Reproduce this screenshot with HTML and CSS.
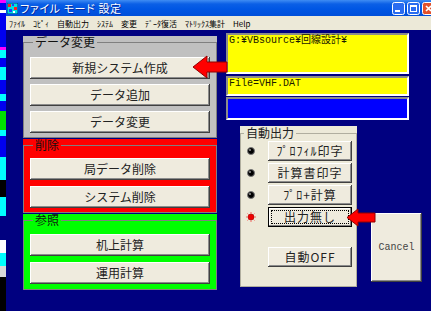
FILE: index.html
```html
<!DOCTYPE html>
<html lang="ja">
<head>
  <meta charset="UTF-8" />
  <title>ファイル モード 設定</title>
  <link rel="stylesheet" href="styles.css">
</head>
<body>
  <div class="strip"></div>

  <div class="window">
    <div class="titlebar">
      <svg class="app-icon" width="11" height="11" viewBox="0 0 11 11">
        <rect width="11" height="11" fill="#00e0e0"/>
        <rect x="1" y="1" width="3" height="3" fill="#ff2020"/>
        <rect x="5" y="1" width="2" height="2" fill="#2040ff"/>
        <rect x="7" y="4" width="3" height="3" fill="#ff2020"/>
        <rect x="2" y="6" width="3" height="3" fill="#2040ff"/>
        <rect x="6" y="8" width="2" height="2" fill="#ffffff"/>
        <rect x="0" y="0" width="11" height="11" fill="none" stroke="#003080" stroke-width="1"/>
      </svg>
      <span class="title">ファイル モード 設定</span>
      <div class="caption">
        <svg class="cap" width="13" height="13" viewBox="0 0 13 13">
          <rect x="0.5" y="0.5" width="12" height="12" rx="2" fill="#2a6cf0" stroke="#fff"/>
          <rect x="3" y="8" width="5" height="2" fill="#fff"/>
        </svg>
        <svg class="cap" width="13" height="13" viewBox="0 0 13 13">
          <rect x="0.5" y="0.5" width="12" height="12" rx="2" fill="#2a6cf0" stroke="#fff"/>
          <rect x="3.5" y="3.5" width="6" height="6" fill="none" stroke="#fff"/>
          <rect x="3" y="3" width="7" height="2" fill="#fff"/>
        </svg>
        <svg class="cap" width="13" height="13" viewBox="0 0 13 13">
          <rect x="0.5" y="0.5" width="12" height="12" rx="2" fill="#e2512c" stroke="#fff"/>
          <path d="M4 4 L9 9 M9 4 L4 9" stroke="#fff" stroke-width="1.6"/>
        </svg>
      </div>
    </div>

    <div class="menubar">
      <span>ﾌｧｲﾙ</span>
      <span>ｺﾋﾟｨ</span>
      <span>自動出力</span>
      <span>ｼｽﾃﾑ</span>
      <span>変更</span>
      <span>ﾃﾞｰﾀ復活</span>
      <span>ﾏﾄﾘｯｸｽ集計</span>
      <span>Help</span>
    </div>

    <div class="client">
      <div class="left">
        <div class="group group-gray">
          <fieldset>
            <legend>データ変更</legend>
            <button class="btn">新規システム作成</button>
            <button class="btn">データ追加</button>
            <button class="btn">データ変更</button>
          </fieldset>
        </div>
        <div class="group group-red">
          <fieldset>
            <legend>削除</legend>
            <button class="btn">局データ削除</button>
            <button class="btn">システム削除</button>
          </fieldset>
        </div>
        <div class="group group-green">
          <fieldset>
            <legend>参照</legend>
            <button class="btn">机上計算</button>
            <button class="btn">運用計算</button>
          </fieldset>
        </div>
      </div>

      <div class="right">
        <div class="box path-box">G:¥VBsource¥回線設計¥</div>
        <div class="box file-box">File=VHF.DAT</div>
        <div class="box blue-box"></div>

        <div class="lower">
          <div class="auto-panel">
            <fieldset>
              <legend>自動出力</legend>
              <div class="auto-row">
                <span class="led"><svg width="10" height="10" viewBox="0 0 10 10"><circle cx="5" cy="5" r="3.5" fill="#000" stroke="#777"/><circle cx="4" cy="4" r="1" fill="#999"/></svg></span>
                <button class="btn btn-small">ﾌﾟﾛﾌｨﾙ印字</button>
              </div>
              <div class="auto-row">
                <span class="led"><svg width="10" height="10" viewBox="0 0 10 10"><circle cx="5" cy="5" r="3.5" fill="#000" stroke="#777"/><circle cx="4" cy="4" r="1" fill="#999"/></svg></span>
                <button class="btn btn-small">計算書印字</button>
              </div>
              <div class="auto-row">
                <span class="led"><svg width="10" height="10" viewBox="0 0 10 10"><circle cx="5" cy="5" r="3.5" fill="#000" stroke="#777"/><circle cx="4" cy="4" r="1" fill="#999"/></svg></span>
                <button class="btn btn-small">ﾌﾟﾛ+計算</button>
              </div>
              <div class="auto-row">
                <span class="led"><svg width="10" height="10" viewBox="0 0 10 10"><path d="M5 0V1.5M5 8.5V10M0 5H1.5M8.5 5H10M1.5 1.5L2.5 2.5M7.5 7.5L8.5 8.5M8.5 1.5L7.5 2.5M2.5 7.5L1.5 8.5" stroke="#ff4040" stroke-width="0.8"/><circle cx="5" cy="5" r="3" fill="#f00000" stroke="#a00000" stroke-width="0.6"/></svg></span>
                <button class="btn btn-small btn-focus">出力無し</button>
              </div>
              <button class="btn btn-small btn-off">自動OFF</button>
            </fieldset>
          </div>
          <button class="btn btn-cancel">Cancel</button>
        </div>
      </div>

      <svg class="arrow arrow-new" width="36" height="24" viewBox="0 0 36 24">
        <polygon points="1,12 15,1 15,7 35,7 35,17 15,17 15,23" fill="#ff0000" stroke="#900000" stroke-width="1"/>
      </svg>
      <svg class="arrow arrow-none" width="30" height="19" viewBox="0 0 30 19">
        <polygon points="1,9.5 12,1 12,5 29,5 29,14 12,14 12,18" fill="#ff0000" stroke="#900000" stroke-width="1"/>
      </svg>
    </div>
  </div>
</body>
</html>
```

FILE: styles.css
```css
* {
  box-sizing: border-box;
}

body {
  margin: 0;
  width: 431px;
  height: 311px;
  overflow: hidden;
  display: flex;
  font-family: "Noto Sans CJK JP", sans-serif;
  background: #000080;
}

/* bits of another window behind this one */
.strip {
  flex: none;
  width: 6px;
  background: linear-gradient(to bottom,
    #ff00ff 0, #ff00ff 3px,
    #0000f0 3px, #0000f0 10px,
    #ffffff 10px, #ffffff 13px,
    #0000f0 13px, #0000f0 47px,
    #ff00ff 47px, #ff00ff 50px,
    #00ffff 50px, #00ffff 58px,
    #0000f0 58px, #0000f0 67px,
    #00ffff 67px, #00ffff 80px,
    #0000f0 80px, #0000f0 94px,
    #00ffff 94px, #00ffff 101px,
    #0000f0 101px, #0000f0 111px,
    #00e000 111px, #00e000 130px,
    #00ffff 130px, #00ffff 136px,
    #0000f0 136px, #0000f0 157px,
    #00ffff 157px, #00ffff 180px,
    #000000 180px, #000000 197px,
    #00ffff 197px, #00ffff 216px,
    #000080 216px, #000080 240px,
    #ffffff 240px, #ffffff 253px,
    #00ffff 253px, #00ffff 266px,
    #d8d8d8 266px, #d8d8d8 277px,
    #000000 277px);
}

.window {
  flex: none;
  width: 429px;
  display: flex;
  flex-direction: column;
}

.titlebar {
  height: 16px;
  display: flex;
  align-items: center;
  padding-left: 1px;
  background: linear-gradient(to bottom, #3f8cf3 0, #0b5fe6 4px, #0056e4 9px, #004fd9 16px);
}

.app-icon {
  flex: none;
}

.title {
  margin-left: 2px;
  color: #fff;
  font-size: 11px;
  font-feature-settings: "palt";
  letter-spacing: 0.6px;
  text-shadow: 1px 1px 0 #0a2a9a;
}

.caption {
  margin-left: auto;
  display: flex;
  gap: 2px;
}

.cap {
  display: block;
}

.menubar {
  height: 14px;
  display: flex;
  align-items: center;
  gap: 8px;
  padding-left: 3px;
  background: #ece9d8;
  font-size: 8px;
  color: #000;
}

.client {
  flex: 1;
  position: relative;
  display: flex;
  align-items: flex-start;
  background: #000080;
}

/* left column: three coloured frames */
.left {
  flex: none;
  width: 194px;
  margin: 5px 0 0 17px;
}

.group fieldset {
  margin: 1px 0 0;
  border: 1px solid #808080;
  padding: 9px 6px 4px;
  display: flex;
  flex-direction: column;
  gap: 5px;
}

.group legend {
  margin-left: 3px;
  padding: 0 2px;
  font-size: 12px;
  line-height: 12px;
  color: #111;
}

.group-gray {
  background: #c0c0c0;
}

.group-red {
  background: #ff0000;
}

.group-red fieldset {
  padding: 7px 6px 4px;
  gap: 6px;
}

.group-green {
  background: #00ff00;
}

.group-green fieldset {
  padding: 8px 6px 5px;
  gap: 6px;
}

.btn {
  display: block;
  margin: 0;
  padding: 0;
  height: 22px;
  border: none;
  background: #efebde;
  box-shadow: inset -1px -1px #404040, inset 1px 1px #ffffff, inset -2px -2px #8c8c8c;
  font-family: "Noto Sans CJK JP", sans-serif;
  font-size: 12px;
  line-height: 22px;
  color: #222;
  text-align: center;
}

/* right column */
.right {
  flex: none;
  width: 183px;
  margin: 3px 0 0 9px;
}

.box {
  border: 2px solid;
  border-color: #8c8c8c #ffffff #ffffff #8c8c8c;
  font-family: "Liberation Mono", "Noto Sans CJK JP", monospace;
  font-size: 10px;
  line-height: 12px;
  color: #1a1a00;
  padding: 0 1px;
}

.path-box {
  height: 41px;
  background: #ffff00;
}

.file-box {
  height: 20px;
  margin-top: 2px;
  background: #ffff00;
}

.blue-box {
  height: 23px;
  margin-top: 1px;
  background: #0000ff;
}

.lower {
  display: flex;
  align-items: flex-start;
  margin-top: 6px;
}

.auto-panel {
  flex: none;
  width: 117px;
  margin-left: 14px;
  background: #ece9d8;
}

.auto-panel fieldset {
  margin: 1px 0 0;
  border: 1px solid #b0ae9f;
  padding: 2px 0 19px;
  display: flex;
  flex-direction: column;
  gap: 2px;
}

.auto-panel legend {
  margin-left: 3px;
  padding: 0 2px;
  font-size: 12px;
  line-height: 12px;
  color: #222;
}

.auto-row {
  display: flex;
  align-items: center;
}

.led {
  width: 27px;
  padding-left: 5px;
  display: flex;
}

.btn-small {
  width: 84px;
  height: 20px;
  line-height: 20px;
  letter-spacing: 1px;
}

.btn-focus {
  box-shadow: inset 0 0 0 1px #000, inset -2px -2px #808080, inset 2px 2px #ffffff;
  outline: 1px dotted #000;
  outline-offset: -4px;
}

.btn-off {
  margin: 18px 0 0 27px;
}

.btn-cancel {
  flex: none;
  width: 51px;
  height: 69px;
  margin: 87px 0 0 14px;
  font-family: "Liberation Mono", monospace;
  font-size: 10px;
  line-height: 12px;
  color: #444;
}

/* red pointers drawn over the buttons */
.arrow {
  position: absolute;
}

.arrow-new {
  left: 186px;
  top: 25px;
}

.arrow-none {
  left: 340px;
  top: 178px;
}
```
